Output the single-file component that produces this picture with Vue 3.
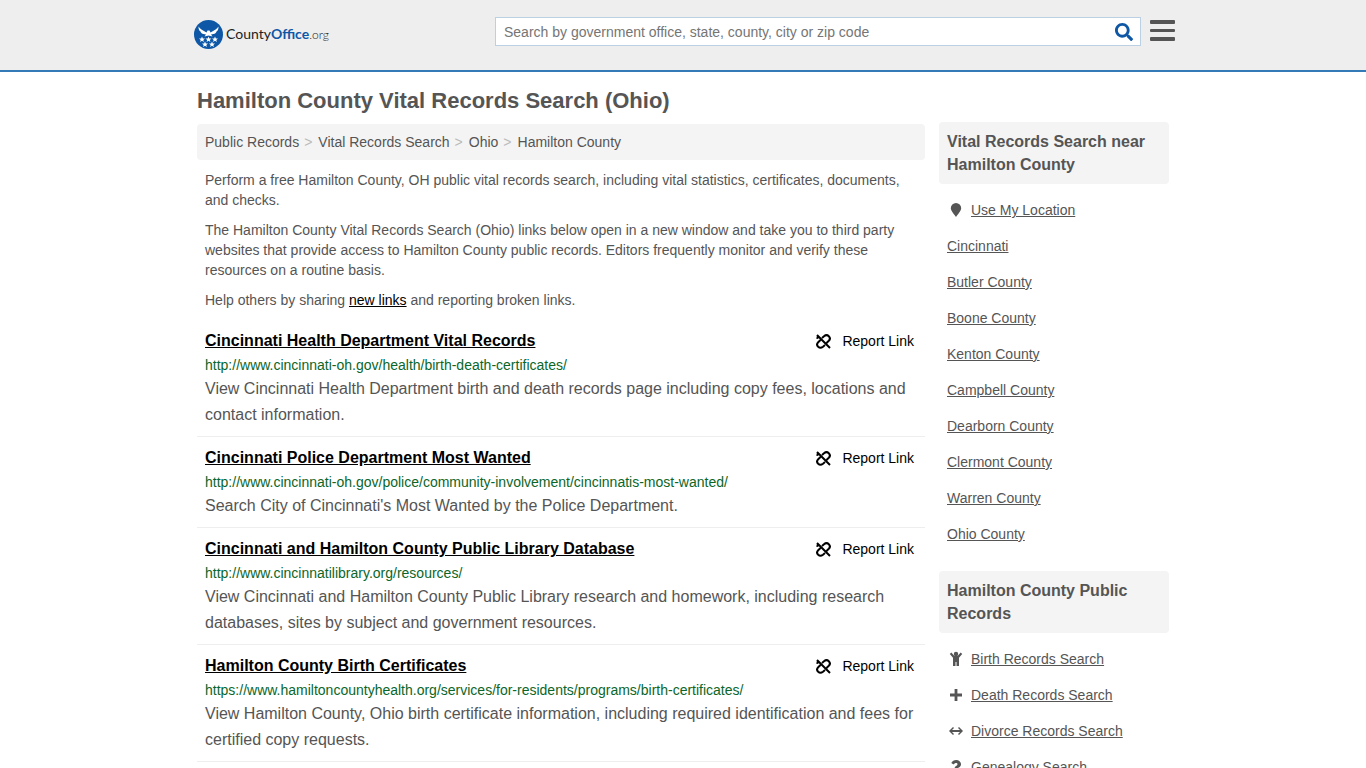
<template>
  <header class="site-header">
    <div class="header-inner">
      <a href="#" class="logo" aria-label="CountyOffice.org home">
        <svg class="logo-mark" viewBox="0 0 58 58" aria-hidden="true">
          <circle cx="29" cy="29" r="29" fill="#0d57a6" />
          <g fill="#fff">
            <path d="M9 13 C12 18 18 21 25 25 L27 21 L31 21 L33 25 C40 21 46 18 49 13 C49 18 48 21 45 23 C44 26 42 28 39 28 L34 29 L37 33 L29 31 L21 33 L24 29 L19 28 C16 28 14 26 13 23 C10 21 9 18 9 13 Z" />
            <path v-for="star in stars" :key="star" :transform="star" :d="starPath" />
          </g>
        </svg>
        <span class="logo-text">County<b>Office</b><span class="logo-tld">.org</span></span>
      </a>
      <form class="search" role="search" @submit.prevent>
        <input
          v-model="query"
          type="text"
          aria-label="Search"
          placeholder="Search by government office, state, county, city or zip code"
        />
        <button type="submit" class="search-button" aria-label="Submit search">
          <svg viewBox="0 0 512 512" width="18" height="18" aria-hidden="true">
            <path fill="#0d57a6" d="M505 442.700 405.300 343c-4.500-4.500-10.600-7-17-7H372c27.600-35.300 44-79.700 44-128C416 93.100 322.900 0 208 0S0 93.100 0 208s93.100 208 208 208c48.300 0 92.700-16.400 128-44v16.300c0 6.400 2.500 12.500 7 17l99.700 99.700c9.400 9.400 24.600 9.400 33.900 0l28.300-28.300c9.400-9.400 9.400-24.600.1-34zM208 336c-70.700 0-128-57.200-128-128 0-70.700 57.200-128 128-128 70.700 0 128 57.200 128 128 0 70.700-57.200 128-128 128z" />
          </svg>
        </button>
      </form>
      <button type="button" class="menu-button" aria-label="Menu">
        <svg viewBox="0 0 25 22" width="25" height="22" aria-hidden="true">
          <rect width="25" height="4" rx="1" />
          <rect y="9" width="25" height="3" rx="1" />
          <rect y="17" width="25" height="4" rx="1" />
        </svg>
      </button>
    </div>
  </header>

  <div class="page">
    <main class="content">
      <h1>Hamilton County Vital Records Search (Ohio)</h1>
      <nav class="breadcrumb" aria-label="Breadcrumb">
        <template v-for="(crumb, index) in crumbs" :key="crumb">
          <span v-if="index" class="separator">&gt;</span>
          <a href="#">{{ crumb }}</a>
        </template>
      </nav>

      <div class="intro">
        <p>Perform a free Hamilton County, OH public vital records search, including vital statistics, certificates, documents, and checks.</p>
        <p>The Hamilton County Vital Records Search (Ohio) links below open in a new window and take you to third party websites that provide access to Hamilton County public records. Editors frequently monitor and verify these resources on a routine basis.</p>
        <p>Help others by sharing <a href="#">new links</a> and reporting broken links.</p>
      </div>

      <article v-for="record in records" :key="record.title" class="record">
        <div class="record-head">
          <h2><a href="#">{{ record.title }}</a></h2>
          <button type="button" class="report">
            <svg viewBox="0 0 15 15" width="15" height="15" aria-hidden="true">
              <path d="M1 1 L14 14 M6 4 L8 2.200 C9.700 .8 11.600 1 12.800 2.200 C14.200 3.600 14.100 5.500 12.800 6.800 L10.500 9 M4.500 6 L2.200 8.200 C.9 9.500 .8 11.400 2.200 12.800 C3.500 14 5.400 14 7 12.700 L9 11 M1.500 4.800 C1.300 3.500 1.600 2.700 2.300 2" />
            </svg>
            Report Link
          </button>
        </div>
        <div class="record-url">{{ record.url }}</div>
        <p>{{ record.description }}</p>
      </article>
    </main>

    <aside class="sidebar">
      <section v-for="section in sections" :key="section.title">
        <h2>{{ section.title }}</h2>
        <ul>
          <li v-for="link in section.links" :key="link.label">
            <svg v-if="link.icon" class="icon" viewBox="0 0 18 16" aria-hidden="true">
              <path :d="icons[link.icon]" />
            </svg>
            <a href="#">{{ link.label }}</a>
          </li>
        </ul>
      </section>
    </aside>
  </div>
</template>

<script setup>
import { ref } from 'vue'

const query = ref('')

const starPath = 'M0 -6 L1.700 -2 L6 -1.900 L2.600 .9 L3.800 5 L0 2.600 L-3.800 5 L-2.600 .9 L-6 -1.900 L-1.700 -2 Z'
const stars = [
  'translate(16 39)',
  'translate(29 39)',
  'translate(42 39)',
  'translate(22 49)',
  'translate(36 49)'
]

const crumbs = ['Public Records', 'Vital Records Search', 'Ohio', 'Hamilton County']

const records = [
  {
    title: 'Cincinnati Health Department Vital Records',
    url: 'http://www.cincinnati-oh.gov/health/birth-death-certificates/',
    description: 'View Cincinnati Health Department birth and death records page including copy fees, locations and contact information.'
  },
  {
    title: 'Cincinnati Police Department Most Wanted',
    url: 'http://www.cincinnati-oh.gov/police/community-involvement/cincinnatis-most-wanted/',
    description: "Search City of Cincinnati's Most Wanted by the Police Department."
  },
  {
    title: 'Cincinnati and Hamilton County Public Library Database',
    url: 'http://www.cincinnatilibrary.org/resources/',
    description: 'View Cincinnati and Hamilton County Public Library research and homework, including research databases, sites by subject and government resources.'
  },
  {
    title: 'Hamilton County Birth Certificates',
    url: 'https://www.hamiltoncountyhealth.org/services/for-residents/programs/birth-certificates/',
    description: 'View Hamilton County, Ohio birth certificate information, including required identification and fees for certified copy requests.'
  }
]

const icons = {
  pin: 'M9 15 C8 13 3.800 9 3.800 6.200 A5.200 5.200 0 0 1 14.200 6.200 C14.200 9 10 13 9 15 Z',
  child: 'M11.200 3 A2.200 2.200 0 1 1 6.800 3 A2.200 2.200 0 1 1 11.200 3 Z M4.300 1.500 L7.500 5 H10.500 L13.700 1.500 L15.200 3 L12 6.800 V15 H9.500 V11 H8.500 V15 H6 V6.800 L2.800 3 Z',
  plus: 'M7.600 2 H10.400 V6.600 H15 V9.400 H10.400 V14 H7.600 V9.400 H3 V6.600 H7.600 Z',
  arrows: 'M6 4 L7 5 L5 7 H13 L11 5 L12 4 L16 8 L12 12 L11 11 L13 9 H5 L7 11 L6 12 L2 8 Z',
  question: 'M4.300 4 C5.300 2 7 1 9.200 1 C12 1 14 2.800 14 5.200 C14 8.300 10.700 8.300 10.700 10 V10.500 H7.500 V9.700 C7.500 7.200 10.500 6.900 10.500 5.300 C10.500 3.600 8 3.500 6.500 5.600 Z M7.300 13.500 A1.800 1.800 0 1 0 10.900 13.500 A1.800 1.800 0 1 0 7.300 13.500 Z'
}

const sections = [
  {
    title: 'Vital Records Search near Hamilton County',
    links: [
      { label: 'Use My Location', icon: 'pin' },
      { label: 'Cincinnati' },
      { label: 'Butler County' },
      { label: 'Boone County' },
      { label: 'Kenton County' },
      { label: 'Campbell County' },
      { label: 'Dearborn County' },
      { label: 'Clermont County' },
      { label: 'Warren County' },
      { label: 'Ohio County' }
    ]
  },
  {
    title: 'Hamilton County Public Records',
    links: [
      { label: 'Birth Records Search', icon: 'child' },
      { label: 'Death Records Search', icon: 'plus' },
      { label: 'Divorce Records Search', icon: 'arrows' },
      { label: 'Genealogy Search', icon: 'question' }
    ]
  }
]
</script>

<style>
body {
  margin: 0;
  background: #fff;
  color: #555;
  font-family: Arial, "Liberation Sans", sans-serif;
  font-size: 14px;
  line-height: 20px;
}

html {
  overflow-x: hidden;
  scrollbar-width: none;
}
</style>

<style scoped>
h1,
h2,
p,
ul {
  margin: 0;
  padding: 0;
}

a {
  color: inherit;
}

button,
input {
  font: inherit;
}

button {
  padding: 0;
  border: 0;
  background: none;
  color: inherit;
  cursor: pointer;
}

.site-header {
  border-bottom: 2px solid #337ab7;
  background: #eee;
}

.header-inner {
  display: flex;
  align-items: flex-start;
  box-sizing: border-box;
  max-width: 984px;
  height: 70px;
  margin: 0 auto;
  padding: 17px 0 0 3px;
}

.logo {
  display: flex;
  align-items: center;
  gap: 3px;
  margin-top: 3px;
  color: #222;
  text-decoration: none;
}

.logo-mark {
  width: 29px;
  height: 29px;
}

.logo-text {
  font-family: Lato, sans-serif;
  font-size: 14px;
}

.logo-text b {
  color: #0d57a6;
}

.logo-tld {
  font-size: 12px;
  font-weight: 300;
}

.search {
  display: flex;
  box-sizing: border-box;
  width: 646px;
  height: 29px;
  margin-left: auto;
  border: 1px solid #bcd0e4;
  background: #fff;
}

.search input {
  flex: 1;
  min-width: 0;
  padding: 0 8px;
  border: 0;
  outline: none;
  background: none;
}

.search input::placeholder {
  color: #757575;
}

.search-button {
  display: flex;
  align-items: center;
  justify-content: center;
  width: 32px;
}

.menu-button {
  display: flex;
  margin: 3px 0 0 9px;
  fill: #555;
}

.page {
  display: grid;
  grid-template-columns: minmax(0, 1fr) 230px;
  gap: 14px;
  max-width: 972px;
  margin: 0 auto;
}

h1 {
  padding: 17px 0 11px;
  font-size: 22px;
  line-height: 24px;
}

.breadcrumb {
  padding: 8px;
  border-radius: 4px;
  background: #f4f4f4;
}

.breadcrumb a {
  text-decoration: none;
}

.separator {
  margin: 0 6px 0 5px;
  color: #bbb;
}

.intro {
  padding: 10px 8px 0;
}

.intro p {
  margin-bottom: 10px;
}

.intro a {
  color: #000;
}

.record {
  padding: 8px;
  border-bottom: 1px solid #eee;
  font-size: 16px;
}

.record-head {
  display: flex;
  justify-content: space-between;
}

.record h2 {
  color: #000;
  font-size: 16px;
  line-height: 26px;
}

.report {
  display: flex;
  align-items: center;
  gap: 11px;
  margin-right: 3px;
  color: #000;
  font-size: 14px;
}

.report svg {
  fill: none;
  stroke: #000;
  stroke-width: 2;
}

.record-url {
  color: #0b6629;
  font-size: 14px;
  line-height: 22px;
}

.record p {
  line-height: 26px;
}

.sidebar {
  padding-top: 50px;
}

.sidebar section {
  margin-bottom: 19px;
}

.sidebar h2 {
  margin-bottom: 8px;
  padding: 8px;
  border-radius: 4px;
  background: #f4f4f4;
  font-size: 16px;
  line-height: 23px;
}

.sidebar ul {
  list-style: none;
}

.sidebar li {
  display: flex;
  align-items: center;
  padding: 8px;
}

.icon {
  width: 18px;
  height: 16px;
  margin-right: 6px;
  fill: #555;
}

@media (max-width: 760px) {
  .page {
    grid-template-columns: 1fr;
    padding: 0 8px;
  }

  .sidebar {
    padding-top: 16px;
  }

  .search {
    width: auto;
    flex: 1;
    margin-left: 12px;
  }
}
</style>
